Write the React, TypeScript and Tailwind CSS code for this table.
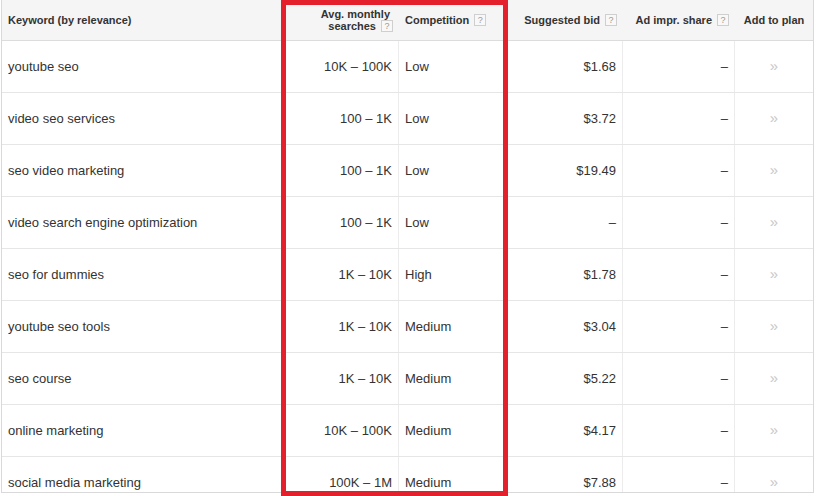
import React from "react";

const rows = [
  ["youtube seo", "10K – 100K", "Low", "$1.68"],
  ["video seo services", "100 – 1K", "Low", "$3.72"],
  ["seo video marketing", "100 – 1K", "Low", "$19.49"],
  ["video search engine optimization", "100 – 1K", "Low", "–"],
  ["seo for dummies", "1K – 10K", "High", "$1.78"],
  ["youtube seo tools", "1K – 10K", "Medium", "$3.04"],
  ["seo course", "1K – 10K", "Medium", "$5.22"],
  ["online marketing", "10K – 100K", "Medium", "$4.17"],
  ["social media marketing", "100K – 1M", "Medium", "$7.88"],
];

function Q() {
  return (
    <span className="inline-flex items-center justify-center w-[12px] h-[12px] border border-[#cfcfcf] bg-[#f8f8f8] text-[#9a9a9a] text-[9px] leading-none font-normal ml-[5px] align-middle">
      ?
    </span>
  );
}

export default function App() {
  return (
    <div
      className="relative w-[816px] h-[496px] bg-white overflow-hidden text-[#333]"
      style={{ fontFamily: '"Liberation Sans", Arial, sans-serif' }}
    >
      <div className="ml-px w-[813px] h-[493px] overflow-hidden border-l border-r border-b border-[#d9d9d9]">
        <div className="grid grid-cols-[282px_115px_107px_117px_112px_78px] h-[41px] bg-[#f5f5f5] border-b border-[#dcdcdc] text-[11px] font-bold text-[#333]">
          <div className="flex items-center pl-[6px]">Keyword (by relevance)</div>
          <div className="flex flex-col items-end justify-center pr-[6px] leading-[12px]">
            <span className="pr-[3px]">Avg. monthly</span>
            <span className="flex items-center">searches<Q /></span>
          </div>
          <div className="flex items-center pl-[6px]">Competition<Q /></div>
          <div className="flex items-center justify-end pr-[6px]">Suggested bid<Q /></div>
          <div className="flex items-center justify-end pr-[6px]">Ad impr. share<Q /></div>
          <div className="flex items-center justify-center">Add to plan</div>
        </div>
        {rows.map((r, i) => (
          <div
            key={i}
            className="grid grid-cols-[282px_115px_107px_117px_112px_78px] h-[52px] border-b border-[#e6e6e6] text-[13px]"
          >
            <div className="flex items-center pl-[6px] border-r border-[#ececec]">{r[0]}</div>
            <div className="flex items-center justify-end pr-[6px] border-r border-[#ececec]">{r[1]}</div>
            <div className="flex items-center pl-[6px] border-r border-[#ececec]">{r[2]}</div>
            <div className="flex items-center justify-end pr-[6px] border-r border-[#ececec]">{r[3]}</div>
            <div className="flex items-center justify-end pr-[6px] border-r border-[#ececec]">–</div>
            <div className="flex items-center justify-center text-[#c8c8c8] text-[15px]">»</div>
          </div>
        ))}
      </div>
      <div className="absolute left-[281px] top-0 w-[227px] h-[496px] border-[5px] border-[#e3202b]" />
    </div>
  );
}
